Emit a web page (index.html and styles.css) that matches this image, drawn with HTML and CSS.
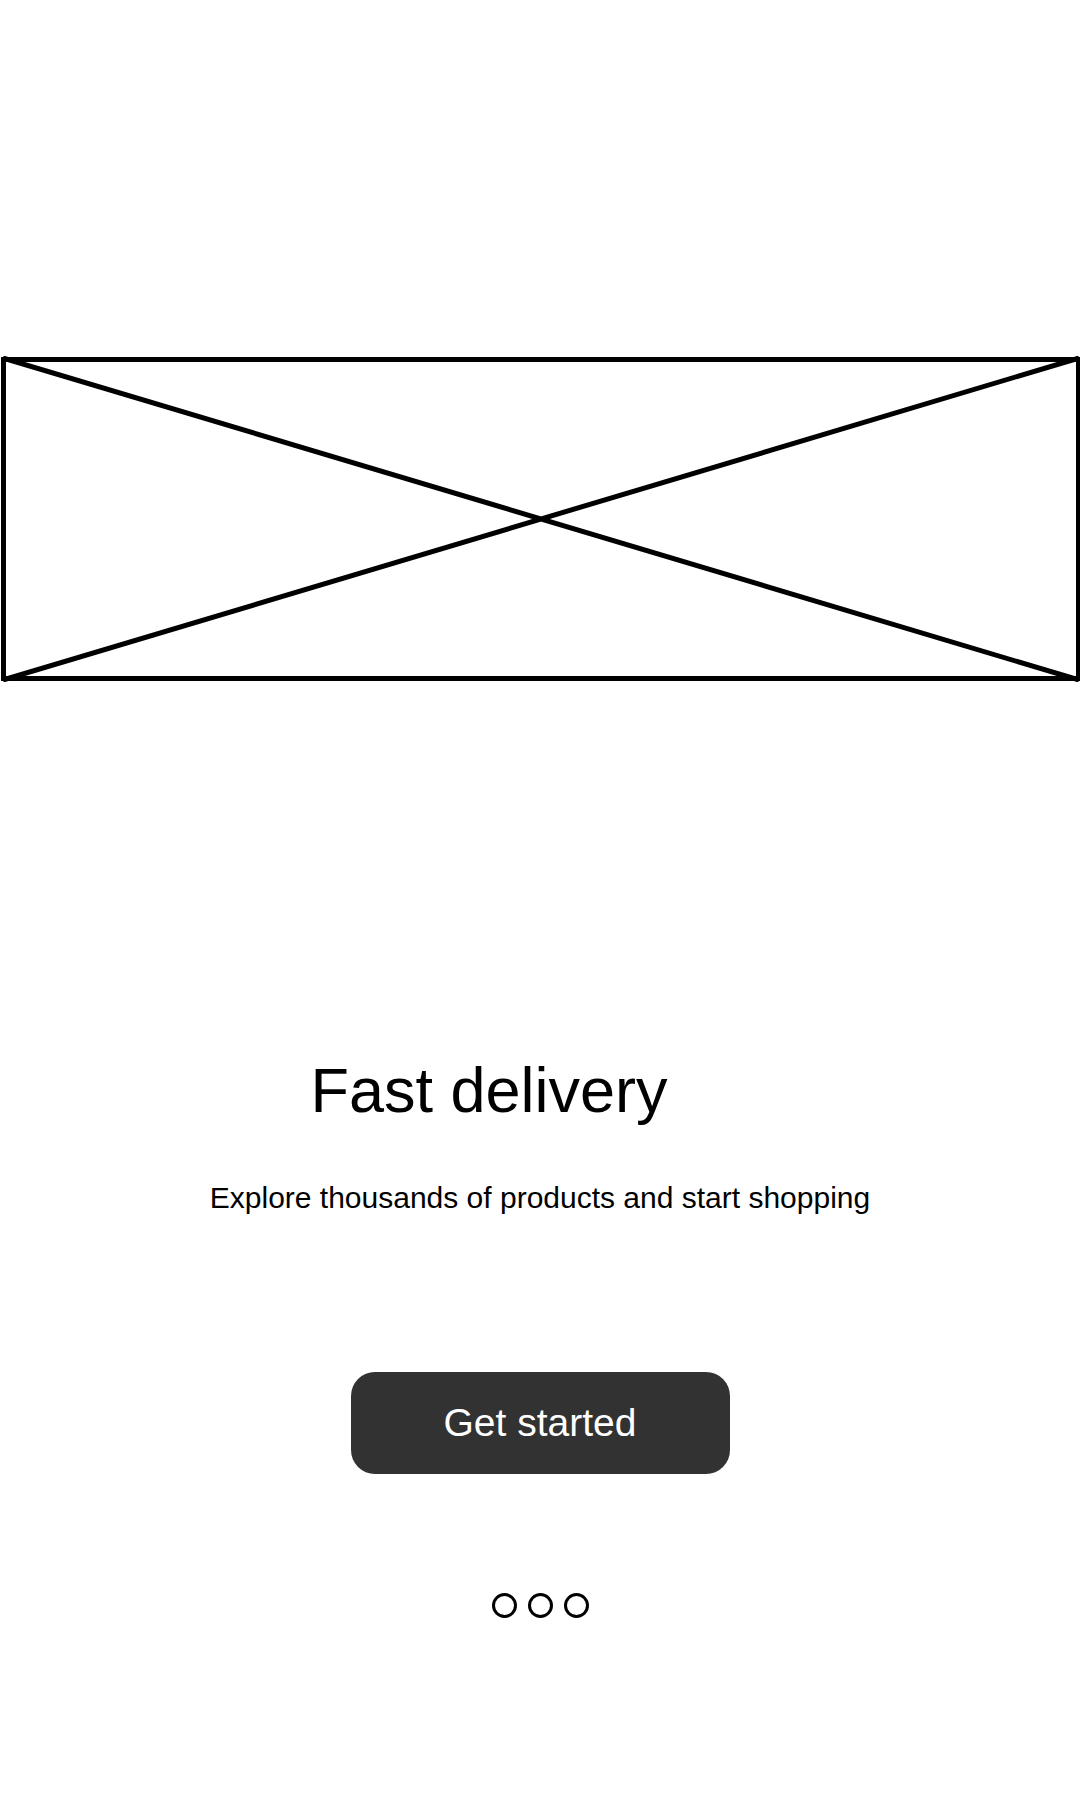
FILE: index.html
```html
<!DOCTYPE html>
<html lang="en">
<head>
<meta charset="utf-8">
<meta name="viewport" content="width=device-width, initial-scale=1">
<title>Fast delivery</title>
<link rel="stylesheet" href="styles.css">
</head>
<body>
<main class="onboarding">
  <svg class="placeholder" viewBox="0 0 1080 326" role="img" aria-label="Image placeholder">
    <path d="M3.5 3.5H1078.5V322.5H3.5Z"/>
    <path d="M3 2L1079 324M3 324L1079 2"/>
  </svg>
  <h1 class="title">Fast delivery</h1>
  <p class="subtitle">Explore thousands of products and start shopping</p>
  <button class="start" type="button">Get started</button>
  <div class="pager">
    <button class="dot" type="button" aria-label="Page 1"></button>
    <button class="dot" type="button" aria-label="Page 2"></button>
    <button class="dot" type="button" aria-label="Page 3"></button>
  </div>
</main>
</body>
</html>
```
FILE: styles.css
```css
* { box-sizing: border-box; }
body {
  margin: 0;
  background: #fff;
  color: #000;
  font-family: "Liberation Sans", Arial, sans-serif;
}
.onboarding {
  display: flex;
  flex-direction: column;
  align-items: center;
  min-height: 100vh;
  padding: 356px 0 160px;
}
.placeholder {
  display: block;
  width: 100%;
  fill: none;
  stroke: #000;
  stroke-width: 5;
}
.title {
  margin: 372px 0 0;
  padding-right: 102px;
  font-size: 63px;
  font-weight: 400;
  line-height: 72px;
}
.subtitle {
  margin: 54px 0 0;
  font-size: 30px;
  line-height: 36px;
}
.start {
  width: 379px;
  height: 102px;
  margin-top: 156px;
  border: 0;
  border-radius: 24px;
  background: #323232;
  color: #fff;
  font: 39px "Liberation Sans", Arial, sans-serif;
}
.pager {
  display: flex;
  gap: 11px;
  margin-top: 119px;
}
.dot {
  width: 25px;
  height: 25px;
  padding: 0;
  border: 3px solid #000;
  border-radius: 50%;
  background: #fff;
}
```
